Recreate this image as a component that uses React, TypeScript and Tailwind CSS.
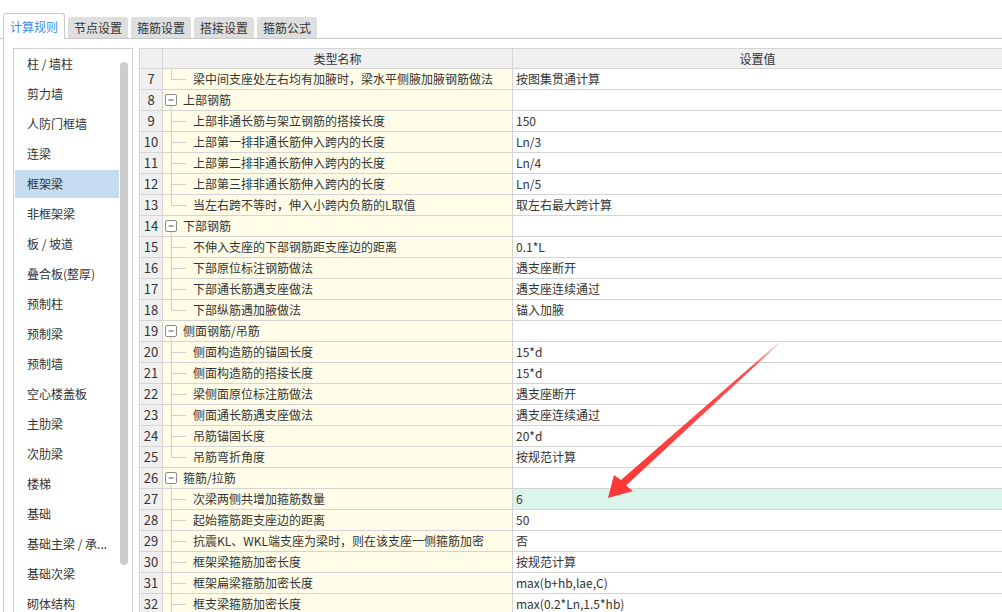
import React from "react";

type Row = {
  n: number;
  kind: "child" | "last" | "group";
  name: string;
  value?: string;
  hl?: boolean;
};

const rows: Row[] = [
  { n: 7, kind: "last", name: "梁中间支座处左右均有加腋时，梁水平侧腋加腋钢筋做法", value: "按图集贯通计算" },
  { n: 8, kind: "group", name: "上部钢筋" },
  { n: 9, kind: "child", name: "上部非通长筋与架立钢筋的搭接长度", value: "150" },
  { n: 10, kind: "child", name: "上部第一排非通长筋伸入跨内的长度", value: "Ln/3" },
  { n: 11, kind: "child", name: "上部第二排非通长筋伸入跨内的长度", value: "Ln/4" },
  { n: 12, kind: "child", name: "上部第三排非通长筋伸入跨内的长度", value: "Ln/5" },
  { n: 13, kind: "last", name: "当左右跨不等时，伸入小跨内负筋的L取值", value: "取左右最大跨计算" },
  { n: 14, kind: "group", name: "下部钢筋" },
  { n: 15, kind: "child", name: "不伸入支座的下部钢筋距支座边的距离", value: "0.1*L" },
  { n: 16, kind: "child", name: "下部原位标注钢筋做法", value: "遇支座断开" },
  { n: 17, kind: "child", name: "下部通长筋遇支座做法", value: "遇支座连续通过" },
  { n: 18, kind: "last", name: "下部纵筋遇加腋做法", value: "锚入加腋" },
  { n: 19, kind: "group", name: "侧面钢筋/吊筋" },
  { n: 20, kind: "child", name: "侧面构造筋的锚固长度", value: "15*d" },
  { n: 21, kind: "child", name: "侧面构造筋的搭接长度", value: "15*d" },
  { n: 22, kind: "child", name: "梁侧面原位标注筋做法", value: "遇支座断开" },
  { n: 23, kind: "child", name: "侧面通长筋遇支座做法", value: "遇支座连续通过" },
  { n: 24, kind: "child", name: "吊筋锚固长度", value: "20*d" },
  { n: 25, kind: "last", name: "吊筋弯折角度", value: "按规范计算" },
  { n: 26, kind: "group", name: "箍筋/拉筋" },
  { n: 27, kind: "child", name: "次梁两侧共增加箍筋数量", value: "6", hl: true },
  { n: 28, kind: "child", name: "起始箍筋距支座边的距离", value: "50" },
  { n: 29, kind: "child", name: "抗震KL、WKL端支座为梁时，则在该支座一侧箍筋加密", value: "否" },
  { n: 30, kind: "child", name: "框架梁箍筋加密长度", value: "按规范计算" },
  { n: 31, kind: "child", name: "框架扁梁箍筋加密长度", value: "max(b+hb,lae,C)" },
  { n: 32, kind: "child", name: "框支梁箍筋加密长度", value: "max(0.2*Ln,1.5*hb)" },
];

const listItems = [
  "柱 / 墙柱",
  "剪力墙",
  "人防门框墙",
  "连梁",
  "框架梁",
  "非框架梁",
  "板 / 坡道",
  "叠合板(整厚)",
  "预制柱",
  "预制梁",
  "预制墙",
  "空心楼盖板",
  "主肋梁",
  "次肋梁",
  "楼梯",
  "基础",
  "基础主梁 / 承...",
  "基础次梁",
  "砌体结构",
];

const inactiveTabs = ["节点设置", "箍筋设置", "搭接设置", "箍筋公式"];

function Connector({ kind }: { kind: Row["kind"] }) {
  if (kind === "group") {
    return (
      <svg width="20" height="20" className="shrink-0">
        <rect x="2.5" y="4.5" width="11" height="11" rx="1.5" fill="#fff" stroke="#8a8a8a" />
        <line x1="5.5" y1="10" x2="10.5" y2="10" stroke="#555" strokeWidth="1" />
        <line x1="8" y1="16" x2="8" y2="20" stroke="#cfcfcf" />
      </svg>
    );
  }
  return (
    <svg width="30" height="20" className="shrink-0">
      <line x1="8.5" y1="0" x2="8.5" y2={kind === "last" ? 10.5 : 20} stroke="#cfcfcf" />
      <line x1="8.5" y1="10.5" x2="23" y2="10.5" stroke="#cfcfcf" />
    </svg>
  );
}

export default function App() {
  return (
    <div
      className="relative w-[1002px] h-[612px] overflow-hidden bg-white text-[12px] text-[#333]"
      style={{ fontFamily: '"Noto Sans CJK SC", "Noto Sans", sans-serif' }}
    >
      {/* Tabs */}
      <div className="flex items-end h-[39px] border-b border-[#c9c9c9] pl-[3px] gap-[3px]">
        <div className="relative z-10 -mb-px flex items-center justify-center w-[62px] h-[26px] bg-white border border-b-0 border-[#c9c9c9] rounded-t-[3px] text-[#3b8ee0]">
          计算规则
        </div>
        {inactiveTabs.map((t) => (
          <div
            key={t}
            className="flex items-center justify-center w-[60px] h-[21px] bg-[#dedede] rounded-t-[3px] text-[#333]"
          >
            {t}
          </div>
        ))}
      </div>

      {/* Body */}
      <div className="flex ml-[3px] border-l border-[#c9c9c9] h-[573px] pl-[9px] pt-[9px]">
        {/* Left list */}
        <div className="flex w-[120px] h-[600px] border border-[#d0d0d0] shrink-0">
          <div className="w-[105px] pl-[1px] pt-[1px]">
            {listItems.map((it) => (
              <div
                key={it}
                className={
                  "flex items-center h-[28px] mb-[2px] pl-[12px] whitespace-nowrap " +
                  (it === "框架梁" ? "bg-[#c5dcf1]" : "")
                }
              >
                {it}
              </div>
            ))}
          </div>
          <div className="ml-[1px] pt-[13px]">
            <div className="w-[8px] h-[503px] rounded-full bg-[#cdcdcd]" />
          </div>
        </div>

        {/* Table */}
        <div className="ml-[6px] flex-1 border-l border-t border-[#d4d4d4] min-w-0">
          <div className="flex h-[20px] border-b border-[#d4d4d4] bg-[#f0f0f0]">
            <div className="w-[23px] border-r border-[#d4d4d4] shrink-0" />
            <div className="w-[350px] border-r border-[#d4d4d4] shrink-0 flex items-center justify-center">
              类型名称
            </div>
            <div className="flex-1 flex items-center justify-center">设置值</div>
          </div>
          {rows.map((r) => (
            <div key={r.n} className="flex h-[21px] border-b border-[#d4d4d4]">
              <div className="w-[23px] shrink-0 border-r border-[#d4d4d4] bg-[#f0f0f0] flex items-center justify-center text-[13px] text-[#333]">
                {r.n}
              </div>
              <div className="w-[350px] shrink-0 border-r border-[#d4d4d4] bg-[#fffde8] flex items-center whitespace-nowrap overflow-hidden">
                <Connector kind={r.kind} />
                <span>{r.name}</span>
              </div>
              <div
                className={
                  "flex-1 flex items-center pl-[3px] whitespace-nowrap " +
                  (r.hl ? "bg-[#dcf5ea]" : "bg-white")
                }
              >
                {r.value ?? ""}
              </div>
            </div>
          ))}
        </div>
      </div>

      {/* Annotation arrow */}
      <svg className="absolute left-0 top-0 pointer-events-none" width="1002" height="612">
        <defs>
          <linearGradient id="ag" x1="779" y1="343" x2="608" y2="498" gradientUnits="userSpaceOnUse">
            <stop offset="0" stopColor="#ff4040" stopOpacity="0.15" />
            <stop offset="0.15" stopColor="#ff3b3b" stopOpacity="0.9" />
            <stop offset="1" stopColor="#fe3535" stopOpacity="1" />
          </linearGradient>
        </defs>
        <polygon
          points="608,498 614,475 621,480 778.5,342.5 779.5,343.5 626,485.5 633,491"
          fill="url(#ag)"
        />
      </svg>
    </div>
  );
}
